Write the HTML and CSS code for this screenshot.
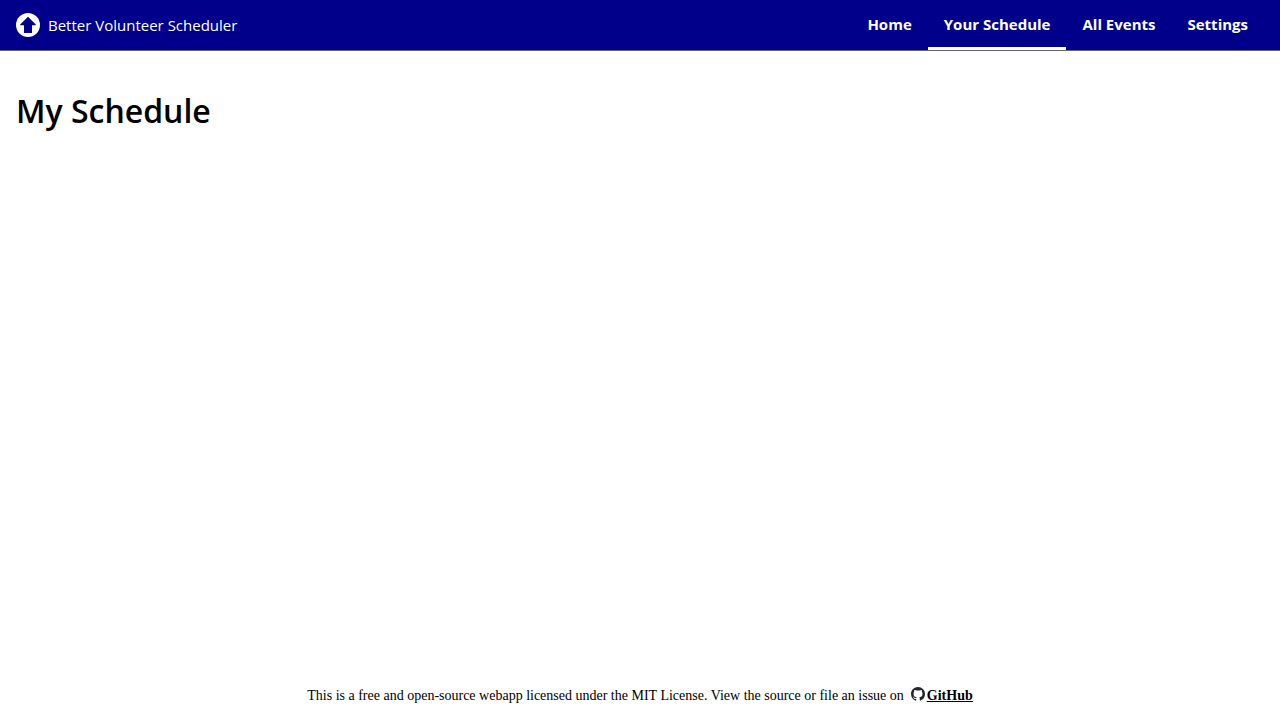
FILE: index.html
```html
<!DOCTYPE html>
<html lang="en">
<head>
<meta charset="utf-8">
<title>Better Volunteer Scheduler</title>
<link rel="stylesheet" href="styles.css">
</head>
<body>
<header class="topbar">
  <a class="brand" href="#">
    <svg class="logo" viewBox="0 0 24 24" aria-hidden="true"><circle cx="12" cy="12" r="12" fill="#fff"/><path d="M12 3.8l7.8 7.8v.6H16V20H8v-7.800H4.200v-.6z" fill="#00008b"/></svg>
    <span>Better Volunteer Scheduler</span>
  </a>
  <nav class="nav">
    <a class="tab" href="#">Home</a>
    <a class="tab active" href="#" aria-current="page">Your Schedule</a>
    <a class="tab" href="#">All Events</a>
    <a class="tab" href="#">Settings</a>
  </nav>
</header>
<main class="content"><h1 class="title">My Schedule</h1></main>
<footer class="footer">
  <span>This is a free and open-source webapp licensed under the MIT License. View the source or file an issue on</span>
  <a class="github" href="#"><svg class="mark" viewBox="0 0 16 16" aria-hidden="true"><path fill="#24292f" d="M8 0C3.58 0 0 3.58 0 8c0 3.54 2.29 6.53 5.47 7.59.4.07.55-.17.55-.38 0-.19-.01-.82-.01-1.49-2.01.37-2.53-.49-2.69-.94-.09-.23-.48-.94-.82-1.13-.28-.15-.68-.52-.01-.53.63-.01 1.08.58 1.23.82.72 1.21 1.87.87 2.33.66.07-.52.28-.87.51-1.07-1.78-.2-3.64-.89-3.64-3.95 0-.87.31-1.59.82-2.15-.08-.2-.36-1.02.08-2.12 0 0 .67-.21 2.2.82.64-.18 1.32-.27 2-.27s1.36.09 2 .27c1.53-1.04 2.2-.82 2.2-.82.44 1.1.16 1.92.08 2.12.51.56.82 1.27.82 2.15 0 3.07-1.87 3.75-3.65 3.95.29.25.54.73.54 1.48 0 1.07-.01 1.93-.01 2.2 0 .21.15.46.55.38A8.01 8.01 0 0 0 16 8c0-4.42-3.58-8-8-8z"/></svg><span class="github-name">GitHub</span></a>
</footer>
</body>
</html>
```
FILE: styles.css
```css
* { box-sizing: border-box; }
body {
  margin: 0;
  min-height: 100vh;
  display: flex;
  flex-direction: column;
  background: #fff;
  color: #000;
  font-family: "Segoe UI", "Open Sans", "Noto Sans", sans-serif;
  font-size: 16px;
}
.topbar {
  display: flex;
  justify-content: space-between;
  align-items: stretch;
  padding: 0 16px;
  background: #00008b;
  border-bottom: 1px solid #666;
}
.brand {
  display: flex;
  align-items: center;
  gap: 8px;
  color: #fff;
  font-size: 15px;
  text-decoration: none;
}
.logo { width: 24px; height: 24px; }
.nav { display: flex; }
.tab {
  padding: 14px 16px 13px;
  border-bottom: 3px solid transparent;
  color: #fff;
  font-size: 15px;
  line-height: 20px;
  font-weight: 700;
  text-decoration: none;
}
.active { border-bottom-color: #fff; }
.content { flex: 1; padding: 38px 16px; }
.title { margin: 0; font-size: 32px; line-height: 44px; font-weight: 600; }
.footer {
  display: flex;
  justify-content: center;
  align-items: center;
  gap: 7px;
  padding: 0 16px 15px;
  font-family: "Liberation Serif", serif;
  font-size: 14px;
  line-height: 18px;
}
.github { display: flex; align-items: flex-start; gap: 2px; color: #000; font-weight: 700; }
.mark { width: 14px; height: 14px; }
.github-name { text-decoration: underline; }
```
